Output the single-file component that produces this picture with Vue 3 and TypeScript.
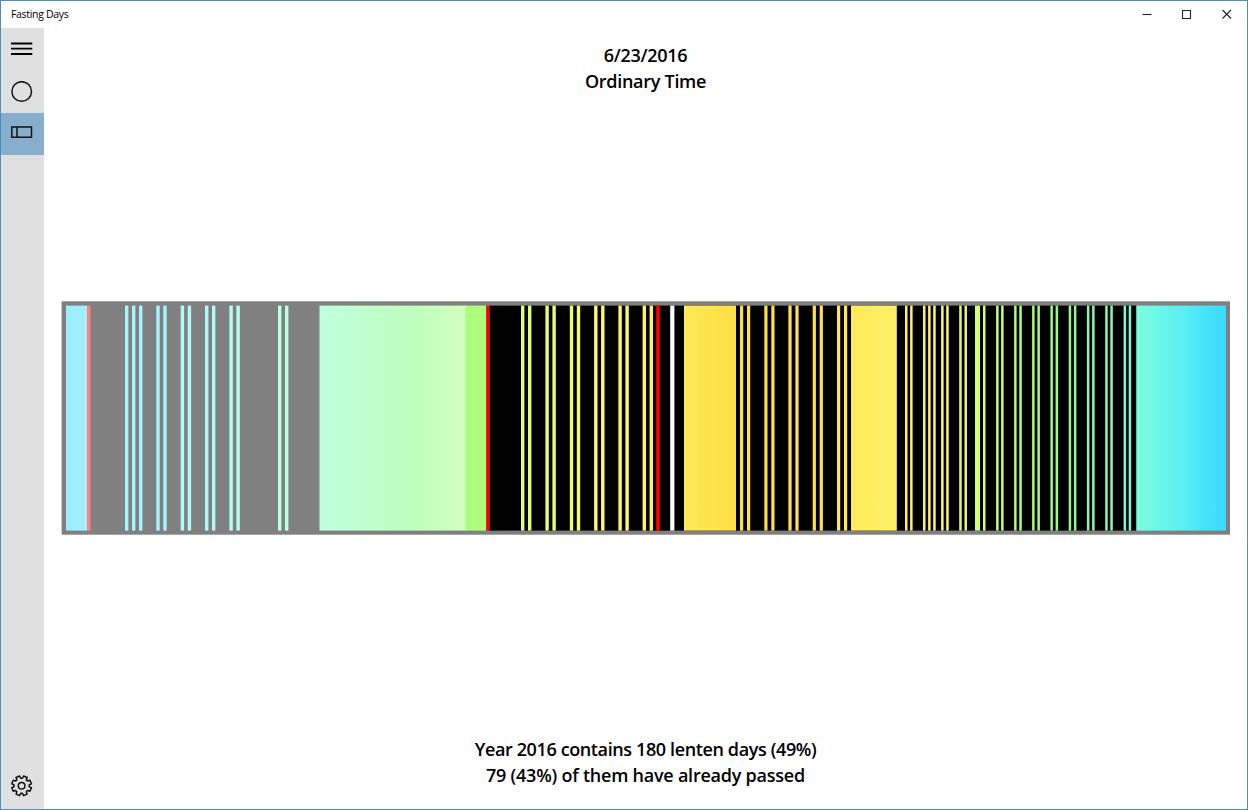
<template>
  <div class="window">
    <header class="title-bar">
      <span class="app-title">Fasting Days</span>
      <div class="window-buttons">
        <button class="window-button" aria-label="Minimize">
          <svg width="10" height="10" viewBox="0 0 10 10"><path d="M0.5 5.5H9.5" /></svg>
        </button>
        <button class="window-button" aria-label="Maximize">
          <svg width="10" height="10" viewBox="0 0 10 10"><path d="M0.5 1.5H8.5V9.5H0.5Z" /></svg>
        </button>
        <button class="window-button" aria-label="Close">
          <svg width="10" height="10" viewBox="0 0 10 10"><path d="M0.5 1L9 9.5M9 1L0.5 9.5" /></svg>
        </button>
      </div>
    </header>

    <div class="body">
      <nav class="sidebar">
        <button class="nav-button" aria-label="Menu">
          <svg class="menu-icon" width="22" height="22" viewBox="0 0 22 22">
            <path d="M0 5.5H21.3M0 10.7H21.3M0 16H21.3" />
          </svg>
        </button>
        <button
          v-for="view in views"
          :key="view"
          class="nav-button"
          :class="{ active: view === currentView }"
          :aria-label="view"
          @click="currentView = view"
        >
          <svg width="22" height="22" viewBox="0 0 22 22">
            <circle v-if="view === 'circle'" cx="10.7" cy="10.5" r="9.8" />
            <path v-else d="M0.8 5H20.5V15.3H0.8ZM6 5V15.3" />
          </svg>
        </button>
        <button class="nav-button settings" aria-label="Settings">
          <svg width="22" height="22" viewBox="0 0 22 22">
            <path :d="gearPath" />
            <circle cx="10.6" cy="10.8" r="3.3" />
          </svg>
        </button>
      </nav>

      <main class="content">
        <div class="caption">
          <div>6/23/2016</div>
          <div>Ordinary Time</div>
        </div>

        <svg class="year" viewBox="61 301 1170 234">
          <defs>
            <linearGradient
              v-for="(block, i) in blocks"
              :id="'block' + i"
              :key="i"
            >
              <stop
                v-for="(color, j) in block.colors"
                :key="j"
                :offset="j / Math.max(1, block.colors.length - 1)"
                :stop-color="color"
              />
            </linearGradient>
          </defs>
          <rect x="61.6" y="301.3" width="1168.4" height="233.4" fill="#808080" />
          <rect
            v-for="(block, i) in blocks"
            :key="i"
            :x="block.from"
            y="305.6"
            :width="block.to - block.from"
            height="225"
            :fill="`url(#block${i})`"
          />
          <rect
            v-for="day in days"
            :key="day.x"
            :x="day.x"
            y="305.6"
            :width="day.width"
            height="225"
            :fill="day.color"
          />
        </svg>

        <div class="caption summary">
          <div class="total">Year 2016 contains 180 lenten days (49%)</div>
          <div>79 (43%) of them have already passed</div>
        </div>
      </main>
    </div>
  </div>
</template>

<script setup lang="ts">
import { ref } from 'vue'

interface Block {
  from: number
  to: number
  colors: string[]
}

interface Day {
  x: number
  width: number
  color: string
}

const views = ['circle', 'strip']
const currentView = ref('strip')

// long periods of the year, each one with its own gradient
const blocks: Block[] = [
  { from: 66, to: 87, colors: ['#9ceeff', '#a2f0ff'] },
  { from: 87, to: 90.4, colors: ['#ff8080', '#ff8080'] },
  { from: 319.5, to: 466, colors: ['#bfffdf', '#bfffcd', '#bfffbe', '#d4ffbf'] },
  { from: 465.5, to: 486.2, colors: ['#a8ff7c', '#b0ff7a'] },
  { from: 486.2, to: 489.7, colors: ['#ff0000', '#ff0000'] },
  { from: 489.7, to: 1136.4, colors: ['#000000', '#000000'] },
  { from: 684, to: 736, colors: ['#ffe957', '#ffdf43'] },
  { from: 851, to: 896.8, colors: ['#ffeb5b', '#fff066'] },
  { from: 1136.4, to: 1226, colors: ['#7dffdf', '#6bf6e8', '#5cf0f0', '#48e4fa', '#3bdaff'] }
]

function stripes(starts: number[], width: number, color: string): Day[] {
  return starts.map((x) => ({ x, width, color }))
}

const days: Day[] = [
  ...stripes([125, 132, 139, 156.3, 163.3], 3.4, '#a6f4ff'),
  ...stripes([180.7, 187.7, 205, 212], 3.4, '#aff9fa'),
  ...stripes([229.4, 236.4], 3.4, '#b3fff2'),
  ...stripes([278, 285], 3.4, '#bcffe4'),
  ...stripes([521, 528], 3.4, '#deff76'),
  ...stripes([545.4, 552.4], 3.4, '#e6fc70'),
  ...stripes([569.8, 576.8], 3.4, '#f3fc6a'),
  ...stripes([594.1, 601.1], 3.4, '#fffa6c'),
  ...stripes([618.4, 625.4], 3.4, '#fff56a'),
  ...stripes([642.6, 649.6], 3.4, '#fff45f'),
  ...stripes([656.2], 3.6, '#ff0000'),
  ...stripes([670.2], 4.2, '#ffffff'),
  ...stripes([740, 747, 764.3, 771.3], 3.2, '#ffdf43'),
  ...stripes([788.4, 795.4, 812.7, 819.7], 3.2, '#ffe14d'),
  ...stripes([837, 844], 3.2, '#ffe652'),
  ...stripes([905, 910.1, 923, 928.1], 2.5, '#fff166'),
  ...stripes([933.2, 941.1, 946.2], 2.5, '#faf76b'),
  ...stripes([959.2, 964.5], 2.5, '#e8f572'),
  ...stripes([975], 5, '#d5ff79'),
  ...stripes([983], 2.5, '#d0ff79'),
  ...stripes([996.1, 1001.1], 2.5, '#c4ff78'),
  ...stripes([1014.1, 1019.3], 2.5, '#b5fb76'),
  ...stripes([1032.1, 1037.4], 2.5, '#a4fb78'),
  ...stripes([1050.4, 1055.6], 2.5, '#98fb80'),
  ...stripes([1068.7, 1073.9], 2.5, '#92f790'),
  ...stripes([1086.9, 1092.1], 2.5, '#8cf6ab'),
  ...stripes([1105.2, 1110.3], 2.5, '#86f7bd'),
  ...stripes([1123.6, 1128.7], 2.5, '#81f4d7')
]

// eight teeth around the hub
function buildGear() {
  const points: string[] = []
  for (let i = 0; i < 8; i++) {
    const shape = [
      [-16, 7.6],
      [-11, 10],
      [11, 10],
      [16, 7.6]
    ]
    for (const [shift, radius] of shape) {
      const angle = ((i * 45 + 22.5 + shift) * Math.PI) / 180
      const x = 10.6 + radius * Math.cos(angle)
      const y = 10.8 + radius * Math.sin(angle)
      points.push(`${x.toFixed(2)} ${y.toFixed(2)}`)
    }
  }
  return `M${points.join('L')}Z`
}

const gearPath = buildGear()
</script>

<style>
body {
  margin: 0;
  background: #fff;
}
</style>

<style scoped>
.window {
  display: flex;
  flex-direction: column;
  width: 100%;
  height: 100vh;
  box-sizing: border-box;
  border: 1px solid #4a8fca;
  background: #fff;
  color: #000;
  font-family: 'Open Sans', 'Noto Sans', sans-serif;
}

button {
  display: flex;
  align-items: center;
  justify-content: center;
  padding: 0;
  border: none;
  background: none;
}

svg {
  display: block;
}

.title-bar {
  display: flex;
  justify-content: space-between;
  height: 27px;
  flex: none;
}

.app-title {
  padding-left: 10px;
  font-size: 10.5px;
  line-height: 26px;
  letter-spacing: -0.32px;
}

.window-buttons {
  display: flex;
}

.window-button {
  width: 40px;
  height: 25px;
}

.window-button svg {
  fill: none;
  stroke: #222;
  stroke-width: 1.1;
}

.body {
  display: flex;
  flex: 1;
  min-height: 0;
}

.sidebar {
  display: flex;
  flex-direction: column;
  width: 43px;
  flex: none;
  background: #e0e0e0;
}

.nav-button {
  width: 43px;
  height: 42px;
  padding-right: 1px;
}

.nav-button:first-child {
  height: 43px;
  padding-bottom: 1px;
}

.nav-button.active {
  padding-bottom: 3px;
  background: #87aecd;
}

.nav-button svg {
  fill: none;
  stroke: #111;
  stroke-width: 1.5;
}

.nav-button .menu-icon {
  stroke: #000;
  stroke-width: 1.8;
}

.settings {
  margin-top: auto;
  height: 46px;
}

.settings svg {
  stroke-linejoin: round;
}

.content {
  display: flex;
  flex: 1;
  flex-direction: column;
  padding: 14px 16px 21px 17px;
}

.caption {
  padding-right: 1px;
  font-size: 18px;
  font-weight: 600;
  line-height: 26px;
  letter-spacing: -0.28px;
  text-align: center;
}

.summary {
  margin-top: auto;
  letter-spacing: -0.23px;
}

.total {
  letter-spacing: -0.38px;
}

.year {
  width: 1170px;
  height: 234px;
  flex: none;
  margin-top: 207px;
}
</style>
